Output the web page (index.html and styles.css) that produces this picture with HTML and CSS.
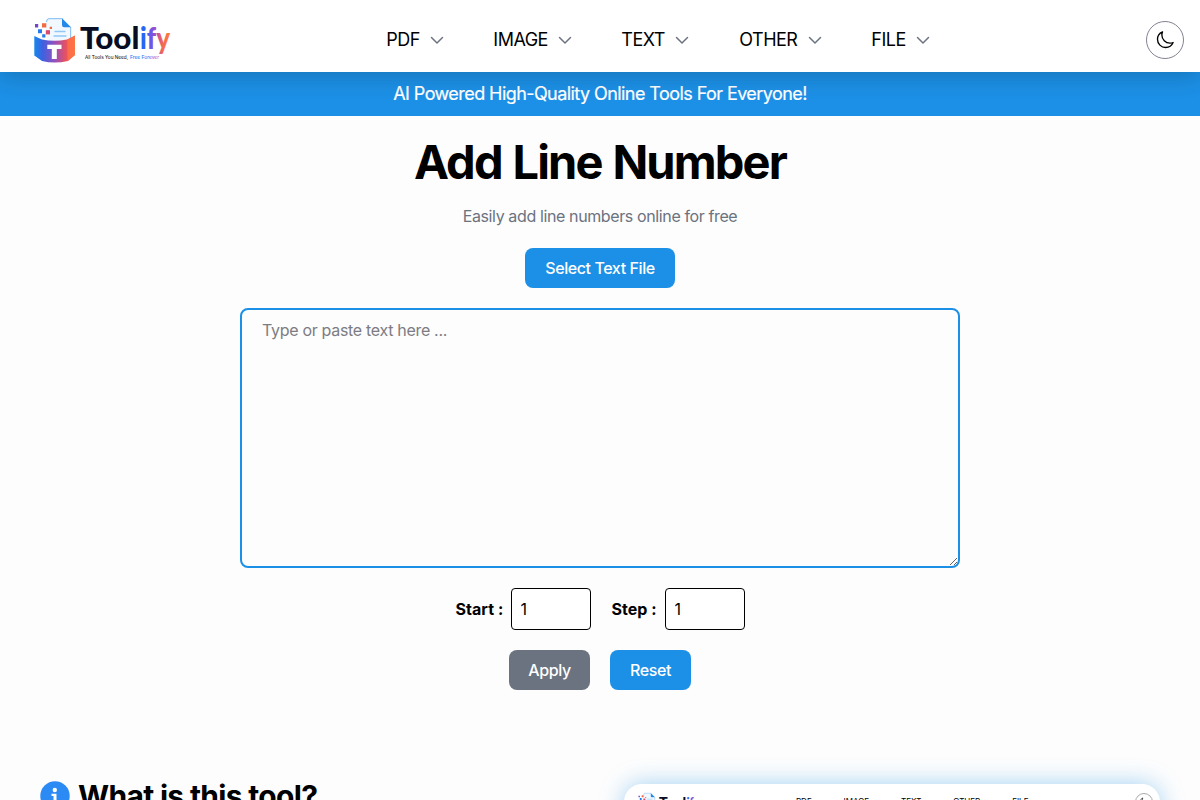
FILE: index.html
```html
<!DOCTYPE html>
<html lang="en">
<head>
<meta charset="utf-8">
<title>Add Line Number - Toolify</title>
<link rel="stylesheet" href="styles.css">
</head>
<body>
<svg class="defs" width="0" height="0" aria-hidden="true">
  <defs>
    <linearGradient id="box" x1="0" x2="1" y1="0" y2="0"><stop offset="0" stop-color="#1688ed"/><stop offset=".2" stop-color="#3b62e0"/><stop offset=".5" stop-color="#9550bd"/><stop offset=".78" stop-color="#e8515f"/><stop offset="1" stop-color="#ff7945"/></linearGradient>
    <linearGradient id="ify" gradientUnits="userSpaceOnUse" x1="107" y1="0" x2="136" y2="0"><stop offset="0" stop-color="#1769f5"/><stop offset=".2" stop-color="#3f63f0"/><stop offset=".42" stop-color="#8650dd"/><stop offset=".6" stop-color="#cf568d"/><stop offset=".75" stop-color="#f46a50"/><stop offset="1" stop-color="#ff7a3c"/></linearGradient>
    <symbol id="logo" viewBox="0 0 140 48">
      <path d="M11.500 7V5.500Q11.500 2.500 14.500 2.500H28L37 11.300V28H13V20" fill="#f1f8ff"/>
      <path d="M12.500 6Q12.500 2.700 15 2.700H28.500M36.700 11V22" fill="none" stroke="#6fb4f4" stroke-width=".9"/>
      <path d="M28 2.300 37 11.300H30Q28 11.300 28 9Z" fill="#248ae9"/>
      <path d="M21 15.500h10M20 20h12" stroke="#91c7f6" stroke-width="1.300" stroke-linecap="round"/>
      <path d="M.3 20 8 23.500Q20.500 26 33 23.500L41 19.500V39l-7 6Q20.500 48 8 45L.3 39.500Z" fill="url(#box)"/>
      <path d="M33.500 23.500 41 19.500V39l-7.500 6Z" fill="#ff7345" opacity=".75"/>
      <path d="M13.300 28.800H27.500v4.200h-4.700v10h-5v-10h-4.500Z" fill="#fff"/>
      <path d="M1 8h3.200v3.500H1Z" fill="#7445ca"/>
      <path d="M8 7.300h4.300v4.300H8ZM15.700 10.700h2.300v2.400h-2.300Z" fill="#f16b43"/>
      <path d="M4 13.200h4v4H4ZM8.200 18.300h3.200v3.200H8.200Z" fill="#277cec"/>
      <path d="M11.800 14.200h4.200v4.200h-4.200Z" fill="#d94b6e"/>
      <text class="wordmark" x="46" y="33" textLength="59.500" lengthAdjust="spacingAndGlyphs">Tool</text>
      <text class="wordmark" x="106" y="33" textLength="30" lengthAdjust="spacingAndGlyphs" fill="url(#ify)">ify</text>
      <text class="motto" x="51" y="43.300" textLength="43" lengthAdjust="spacingAndGlyphs">All Tools You Need,</text>
      <text class="motto" x="96" y="43.300" textLength="29" lengthAdjust="spacingAndGlyphs" fill="url(#ify)">Free Forever</text>
    </symbol>
    <symbol id="chevron" viewBox="0 0 14 9"><path d="M1.500 1.500 7 7l5.500-5.500" fill="none" stroke="#6b7280" stroke-width="1.500" stroke-linecap="round" stroke-linejoin="round"/></symbol>
    <symbol id="moon" viewBox="0 0 24 24"><path d="M21.752 15.002A9.720 9.720 0 0 1 18 15.750 9.750 9.750 0 0 1 8.250 6c0-1.330.266-2.597.748-3.752A9.753 9.753 0 0 0 3 11.250 9.750 9.750 0 0 0 12.750 21a9.753 9.753 0 0 0 9.002-5.998Z" fill="none" stroke="#000" stroke-width="1.600" stroke-linejoin="round"/></symbol>
  </defs>
</svg>
<header class="header">
  <svg class="logo"><use href="#logo"/></svg>
  <nav class="nav">
    <a class="item pdf"><span>PDF</span><svg class="chevron"><use href="#chevron"/></svg></a>
    <a class="item image"><span>IMAGE</span><svg class="chevron"><use href="#chevron"/></svg></a>
    <a class="item text"><span>TEXT</span><svg class="chevron"><use href="#chevron"/></svg></a>
    <a class="item other"><span>OTHER</span><svg class="chevron"><use href="#chevron"/></svg></a>
    <a class="item file"><span>FILE</span><svg class="chevron"><use href="#chevron"/></svg></a>
  </nav>
  <button class="theme" aria-label="Dark mode"><svg class="moon"><use href="#moon"/></svg></button>
</header>
<div class="banner"><span>AI Powered High-Quality Online Tools For Everyone!</span></div>
<main class="main">
  <h1 class="title"><span>Add Line Number</span></h1>
  <p class="lead"><span>Easily add line numbers online for free</span></p>
  <button class="btn select"><span>Select Text File</span></button>
  <textarea class="editor" placeholder="Type or paste text here ..."></textarea>
  <div class="options">
    <label class="option"><span class="start">Start :</span><input value="1"></label>
    <label class="option"><span class="step">Step :</span><input value="1"></label>
  </div>
  <div class="actions"><button class="btn gray">Apply</button><button class="btn">Reset</button></div>
</main>
<section class="about">
  <h2 class="about-title"><svg class="info" viewBox="0 0 30 30"><circle cx="15" cy="15" r="14.700" fill="#2b8af3"/><circle cx="14.800" cy="9" r="2.200" fill="#fff"/><path d="M11.500 12.700h5v8h2v2.300h-7v-2.300h2V15h-2Z" fill="#fff"/></svg><span>What is this tool?</span></h2>
  <div class="preview">
    <svg class="mini-logo"><use href="#logo"/></svg>
    <div class="mini-nav"><span>PDF</span><span>IMAGE</span><span>TEXT</span><span>OTHER</span><span>FILE</span></div>
    <div class="mini-theme"><svg class="mini-moon"><use href="#moon"/></svg></div>
  </div>
</section>
</body>
</html>
```
FILE: styles.css
```css
* { box-sizing: border-box; }
body { margin: 0; height: 800px; overflow: hidden; background: #fdfdfd; color: #000; font-family: Inter, "Liberation Sans", sans-serif; font-size: 16px; line-height: 24px; }
button, input, textarea { font: inherit; }
.defs { display: block; }
.header { position: relative; z-index: 1; height: 72px; padding-top: 8px; display: grid; grid-template-columns: 372px 1fr 54px; align-items: center; background: #fff; box-shadow: 0 4px 22px rgba(0,0,0,.2); }
.logo { width: 140px; height: 48px; margin-left: 34px; }
.wordmark { font-family: Lato, sans-serif; font-size: 30px; font-weight: 900; }
.wordmark:not([fill]) { fill: #070d22; }
.motto { font-size: 4.500px; font-weight: 400; }
.nav { display: flex; padding-left: 14px; font-size: 18px; line-height: 28px; letter-spacing: -.5px; }
.item { display: flex; align-items: center; justify-content: space-between; }
.item span { padding-left: .3px; }
.chevron { width: 14px; height: 9px; margin-top: 1px; }
.pdf { width: 58px; margin-right: 49px; }
.image { width: 79px; margin-right: 49px; }
.text { width: 68px; margin-right: 50px; }
.other { width: 83px; margin-right: 49px; }
.file { width: 59px; }
.theme { width: 38px; height: 38px; padding: 0; display: grid; place-items: center; border: 1px solid #858292; border-radius: 50%; background: #fff; }
.moon { width: 20px; height: 20px; }
.banner { height: 44px; background: #1c90e6; color: #fff; font-size: 18px; line-height: 44px; text-align: center; letter-spacing: -.57px; -webkit-text-stroke: .2px #fff; }
.main { display: flex; flex-direction: column; align-items: center; }
.title { margin: 22px 0 0; font-size: 47px; line-height: 48px; font-weight: 700; letter-spacing: -1.850px; word-spacing: 1.500px; }
.lead { margin: 18px 0 0; color: #6b7280; letter-spacing: -.38px; }
.btn { height: 40px; min-width: 81px; padding: 0; border: 0; border-radius: 8px; background: #1c90e6; color: #fff; font-weight: 500; letter-spacing: -.420px; }
.gray { background: #6b7280; }
.select { width: 150px; margin-top: 20px; }
.editor { width: 720px; height: 260px; margin-top: 20px; padding: 8px 20px; border: 2px solid #1c90e6; border-radius: 8px; background: #fdfdfd; outline: 0; letter-spacing: -.31px; }
.editor::placeholder { color: #7c7c82; }
.options { display: flex; gap: 21px; margin-top: 20px; }
.option { display: flex; align-items: center; gap: 8px; font-weight: 700; letter-spacing: .05px; }
.start { width: 47px; white-space: nowrap; }
.step { width: 45px; white-space: nowrap; }
.option input { width: 80px; height: 42px; padding: 8px 8px 8px 9px; border: 1px solid #000; border-radius: 4px; background: #fff; font-weight: 400; }
.actions { display: flex; gap: 20px; margin-top: 20px; }
.about { height: 110px; padding: 90px 40px 0; display: grid; grid-template-columns: 584px 536px; overflow: hidden; }
.about-title { display: flex; align-items: center; gap: 8px; margin: 0; height: 32px; font-size: 30px; line-height: 36px; font-weight: 700; letter-spacing: -.68px; }
.info { width: 30px; height: 30px; }
.preview { height: 200px; margin-top: 4px; padding: 6px 6px 0 14px; display: grid; grid-template-columns: 158px 1fr 19px; align-items: start; border-radius: 18px; background: #fff; box-shadow: 0 0 25px rgba(28,144,230,.4); }
.mini-logo { width: 64px; height: 22px; margin-top: 2px; }
.mini-nav { display: flex; gap: 32px; padding-top: 3px; font-size: 8px; line-height: 16px; }
.mini-theme { width: 18px; height: 18px; margin-top: 3px; display: grid; place-items: center; border: 1px solid #aaa; border-radius: 50%; }
.mini-moon { width: 10px; height: 10px; }
```
